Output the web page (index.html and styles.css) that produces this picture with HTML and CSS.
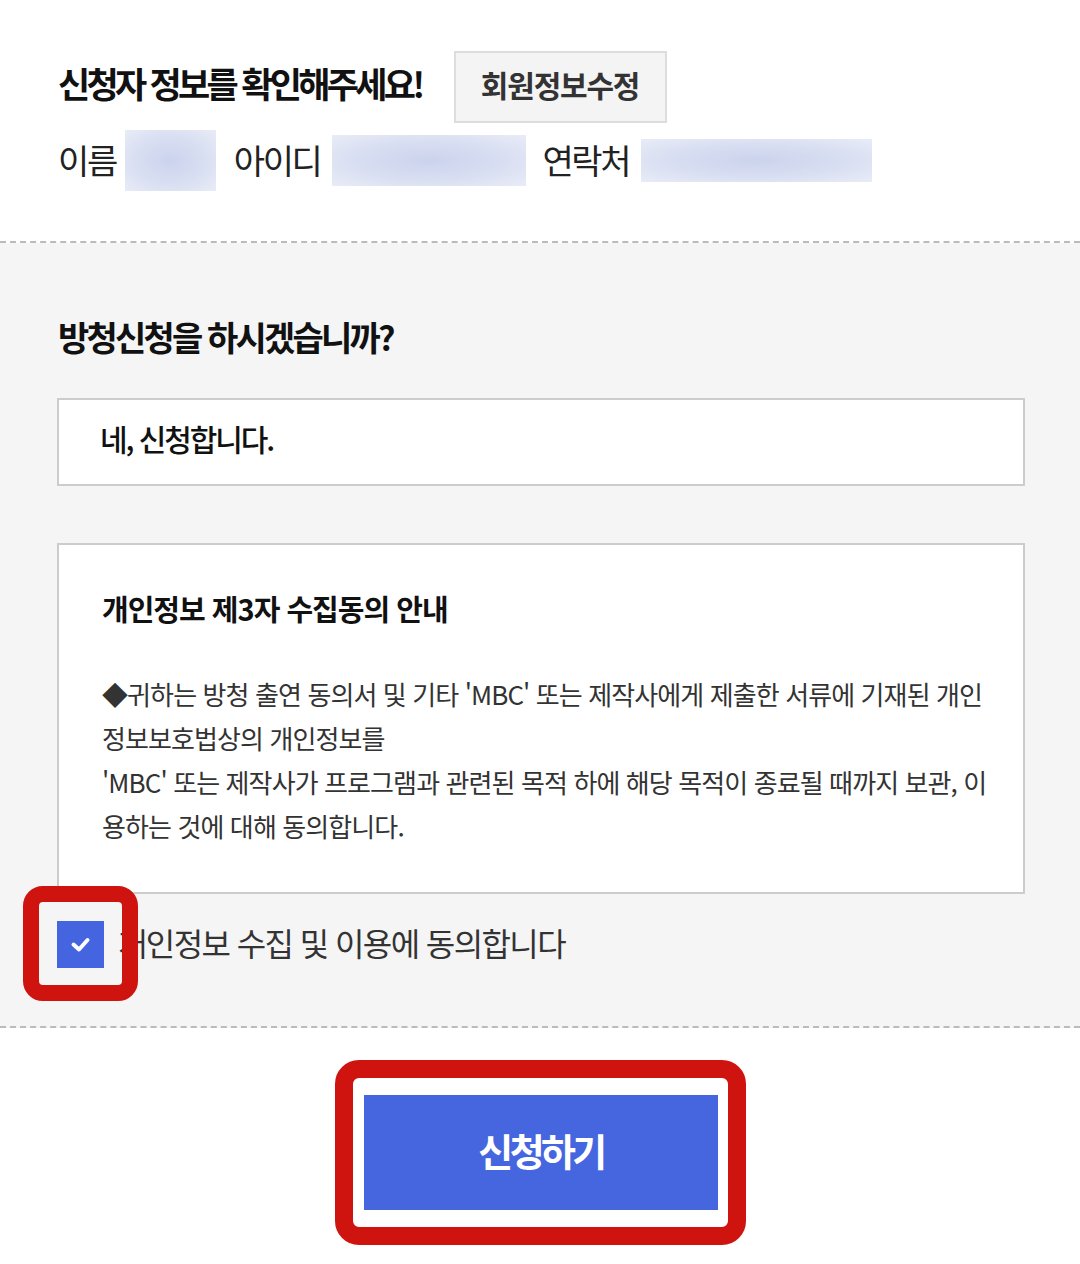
FILE: index.html
```html
<!doctype html>
<html lang="ko">
<head>
<meta charset="utf-8">
<meta name="viewport" content="width=device-width, initial-scale=1.0">
<title>방청신청</title>
<link rel="stylesheet" href="styles.css">
</head>
<body>

<div class="applicant">
  <div class="applicant-head">
    <h2 class="applicant-title">신청자 정보를 확인해주세요!</h2>
    <a href="#" class="edit-btn">회원정보수정</a>
  </div>
  <div class="applicant-info">
    <span class="info-label">이름</span>
    <span class="masked masked-name"></span>
    <span class="info-label">아이디</span>
    <span class="masked masked-id"></span>
    <span class="info-label">연락처</span>
    <span class="masked masked-phone"></span>
  </div>
</div>

<div class="apply">
  <h3 class="apply-title">방청신청을 하시겠습니까?</h3>
  <div class="apply-select">네, 신청합니다.</div>

  <div class="terms">
    <h4 class="terms-title">개인정보 제3자 수집동의 안내</h4>
    <p class="terms-text">◆귀하는 방청 출연 동의서 및 기타 'MBC' 또는 제작사에게 제출한 서류에 기재된 개인정보보호법상의 개인정보를<br>'MBC' 또는 제작사가 프로그램과 관련된 목적 하에 해당 목적이 종료될 때까지 보관, 이용하는 것에 대해 동의합니다.</p>
  </div>

  <label class="agree">
    <span class="agree-box">
      <svg width="47" height="47" viewBox="0 0 47 47"><polyline points="16.5,23.5 22,28.5 30.5,19" fill="none" stroke="#fff" stroke-width="4" stroke-linecap="round" stroke-linejoin="round"/></svg>
    </span>
    <span class="agree-text">개인정보 수집 및 이용에 동의합니다</span>
    <span class="mark mark-check"></span>
  </label>
</div>

<div class="submit">
  <div class="submit-wrap">
    <button class="submit-btn">신청하기</button>
    <span class="mark mark-submit"></span>
  </div>
</div>

</body>
</html>
```

FILE: styles.css
```css
body {
  margin: 0;
  font-family: "Noto Sans CJK KR", "Noto Sans", sans-serif;
  color: #222;
  background: #fff;
}
h2, h3, h4, p {
  margin: 0;
}

/* applicant info */
.applicant {
  padding: 51px 58px 50px;
  border-bottom: 2px dashed #bbb;
}
.applicant-head {
  display: flex;
  align-items: center;
  gap: 32px;
}
.applicant-title {
  font-size: 35px;
  font-weight: 700;
  letter-spacing: -3.7px;
  color: #111;
  line-height: 1.2;
  margin-top: -8px;
}
.edit-btn {
  display: flex;
  align-items: center;
  justify-content: center;
  width: 213px;
  height: 72px;
  box-sizing: border-box;
  border: 2px solid #ddd;
  background: #f4f4f4;
  padding-bottom: 6px;
  font-size: 30px;
  font-weight: 700;
  letter-spacing: -1.2px;
  color: #333;
  text-decoration: none;
}
.applicant-info {
  display: flex;
  align-items: center;
  margin-top: 7px;
}
.info-label {
  font-size: 34px;
  letter-spacing: -2.4px;
  color: #222;
  line-height: 1.2;
  margin-right: 12px;
}
.info-label:first-child {
  margin-right: 9px;
}
.masked {
  display: inline-block;
  background: radial-gradient(ellipse at center, #cbd3ed 0%, #d9dff2 55%, #e9ecf7 100%);
}
.masked-name { width: 91px; height: 61px; margin-right: 18px; }
.masked-id { width: 194px; height: 51px; margin-right: 16px; }
.masked-phone { width: 231px; height: 43px; }

/* apply area */
.apply {
  background: #f5f5f5;
  padding: 73px 55px 58px 57px;
  border-bottom: 2px dashed #bbb;
}
.apply-title {
  font-size: 34px;
  font-weight: 700;
  letter-spacing: -2.8px;
  color: #111;
  line-height: 41px;
  margin-left: 1px;
}
.apply-select {
  margin-top: 41px;
  height: 88px;
  box-sizing: border-box;
  border: 2px solid #ccc;
  background: #fff;
  display: flex;
  align-items: center;
  padding: 0 0 8px 41px;
  font-size: 30px;
  font-weight: 500;
  letter-spacing: -2.1px;
  color: #111;
}
.terms {
  margin-top: 57px;
  border: 2px solid #ccc;
  background: #fff;
  padding: 43px 35px 44px 43px;
}
.terms-title {
  font-size: 29px;
  font-weight: 700;
  letter-spacing: -1px;
  line-height: 40px;
  color: #111;
}
.terms-text {
  margin-top: 44px;
  font-size: 26px;
  letter-spacing: -0.9px;
  line-height: 44px;
  color: #333;
  word-break: break-all;
}
.agree {
  position: relative;
  display: flex;
  align-items: center;
  gap: 14px;
  margin-top: 27px;
}
.agree-box {
  display: block;
  width: 47px;
  height: 47px;
  background: #4564df;
}
.agree-box svg {
  display: block;
}
.agree-text {
  font-size: 32px;
  letter-spacing: -1.6px;
  color: #333;
  line-height: 47px;
  margin-top: -4px;
}

/* submit */
.submit {
  display: flex;
  justify-content: center;
  padding: 67px 0 54px;
}
.submit-wrap {
  position: relative;
  margin-left: 2px;
}
.submit-btn {
  display: block;
  width: 354px;
  height: 115px;
  border: none;
  background: #4666e0;
  color: #fff;
  font-family: inherit;
  font-size: 38px;
  font-weight: 700;
  letter-spacing: -3.6px;
  padding-bottom: 8px;
}

/* red annotation boxes */
.mark {
  position: absolute;
  box-sizing: border-box;
  border: 16px solid #cf1410;
  border-radius: 20px;
  pointer-events: none;
}
.mark-check {
  left: -34px;
  top: -35px;
  width: 115px;
  height: 115px;
}
.mark-submit {
  left: -29px;
  top: -35px;
  width: 411px;
  height: 185px;
  border-width: 18px;
  border-radius: 24px;
}
```
